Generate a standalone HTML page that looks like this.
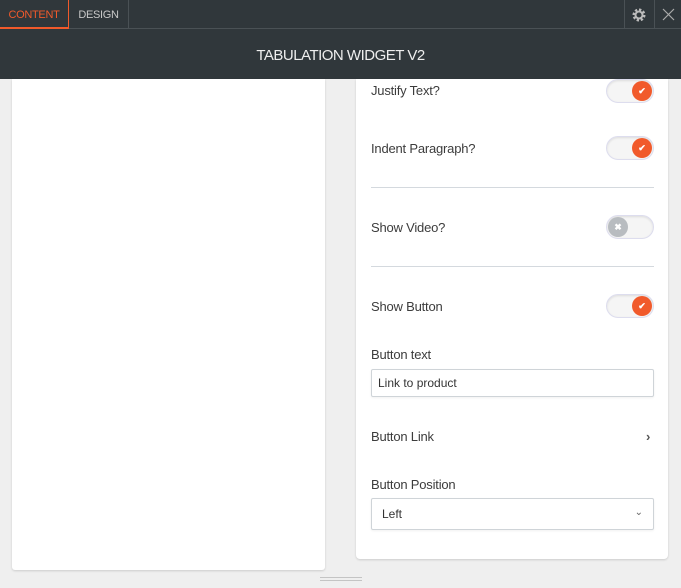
<!DOCTYPE html><html><head><style>
*{box-sizing:border-box;margin:0;padding:0}
body{width:681px;height:588px;background:#efefef;font-family:"Liberation Sans",sans-serif;position:relative;overflow:hidden;color:#3c3c3c}
.top{position:absolute;left:0;top:0;width:681px;height:29px;background:#30373b;border-bottom:1px solid #4a5155}
.tab{position:absolute;top:0;height:29px;line-height:31px;font-size:11px;text-align:center;letter-spacing:-.3px}
.hdr{position:absolute;left:0;top:29px;width:681px;height:50px;background:#30373b;color:#eee;text-align:center;line-height:54px;font-size:15px;letter-spacing:-.5px}
.lp{position:absolute;left:12px;top:79px;width:313px;height:491px;background:#fff;border-radius:0 0 3px 3px;box-shadow:0 1px 2px rgba(0,0,0,.15)}
.rp{position:absolute;left:356px;top:79px;width:312px;height:480px;background:#fff;border-radius:0 0 4px 4px;box-shadow:0 1px 2px rgba(0,0,0,.15)}
.lbl{position:absolute;left:371px;font-size:13px;color:#3c3c3c;letter-spacing:-.2px}
.tg{position:absolute;left:606px;width:48px;height:24px;border-radius:12px;background:#f5f5f5;border:1px solid #dde;box-shadow:inset 0 1px 2px rgba(0,0,0,.1)}
.tg .k{position:absolute;top:1px;width:20px;height:20px;border-radius:50%;background:#f15a2b;color:#fff;font-size:9px;text-align:center;line-height:20px;font-weight:bold}
.hr{position:absolute;left:371px;width:283px;height:1px;background:#d4d9de}
.in{position:absolute;left:371px;width:283px;border:1px solid #cfd4d8;border-radius:2px;font-size:12px;color:#333;box-shadow:0 1px 2px rgba(0,0,0,.06)}
</style></head><body>
<div class="top">
<div class="tab" style="left:0;width:69px;color:#f15a2b;border-right:1px solid #f15a2b;border-bottom:2px solid #f15a2b;height:29px">CONTENT</div>
<div class="tab" style="left:69px;width:60px;color:#c8c8c8;border-right:1px solid #4a5155">DESIGN</div>
<div style="position:absolute;left:624px;top:0;width:1px;height:29px;background:#4a5155"></div>
<div style="position:absolute;left:654px;top:0;width:1px;height:29px;background:#4a5155"></div>
<svg style="position:absolute;left:631px;top:7px" width="16" height="16" viewBox="0 0 16 16"><circle cx="8" cy="8" r="5" fill="none" stroke="#bbb" stroke-width="3" stroke-dasharray="2.2 1.7"/><circle cx="8" cy="8" r="3.5" fill="none" stroke="#bbb" stroke-width="2"/></svg>
<svg style="position:absolute;left:662px;top:8px" width="13" height="13" viewBox="0 0 13 13"><path d="M1 1L12 12M12 1L1 12" stroke="#aaa" stroke-width="1.2"/></svg>
</div>
<div class="hdr">TABULATION WIDGET V2</div>
<div class="lp"></div>
<div class="rp"></div>
<div class="lbl" style="top:83px">Justify Text?</div>
<div class="tg" style="top:79px"><div class="k" style="left:25px">✔</div></div>
<div class="lbl" style="top:141px">Indent Paragraph?</div>
<div class="tg" style="top:136px"><div class="k" style="left:25px">✔</div></div>
<div class="hr" style="top:187px"></div>
<div class="lbl" style="top:220px">Show Video?</div>
<div class="tg" style="top:215px"><div class="k" style="left:1px;background:#b8bcc0">✖</div></div>
<div class="hr" style="top:266px"></div>
<div class="lbl" style="top:299px">Show Button</div>
<div class="tg" style="top:294px"><div class="k" style="left:25px">✔</div></div>
<div class="lbl" style="top:347px">Button text</div>
<div class="in" style="top:369px;height:28px;line-height:26px;padding-left:6px">Link to product</div>
<div class="lbl" style="top:429px">Button Link</div>
<div style="position:absolute;left:646px;top:429px;font-size:13px;color:#555;font-weight:bold">›</div>
<div class="lbl" style="top:477px">Button Position</div>
<div class="in" style="top:498px;height:32px;line-height:30px;padding-left:10px">Left<span style="position:absolute;right:10px;top:-1px;font-size:10px;color:#666">⌄</span></div>
<div style="position:absolute;left:320px;top:577px;width:42px;height:4px;border-top:1px solid #c4c4c4;border-bottom:1px solid #c4c4c4"></div>
</body></html>
